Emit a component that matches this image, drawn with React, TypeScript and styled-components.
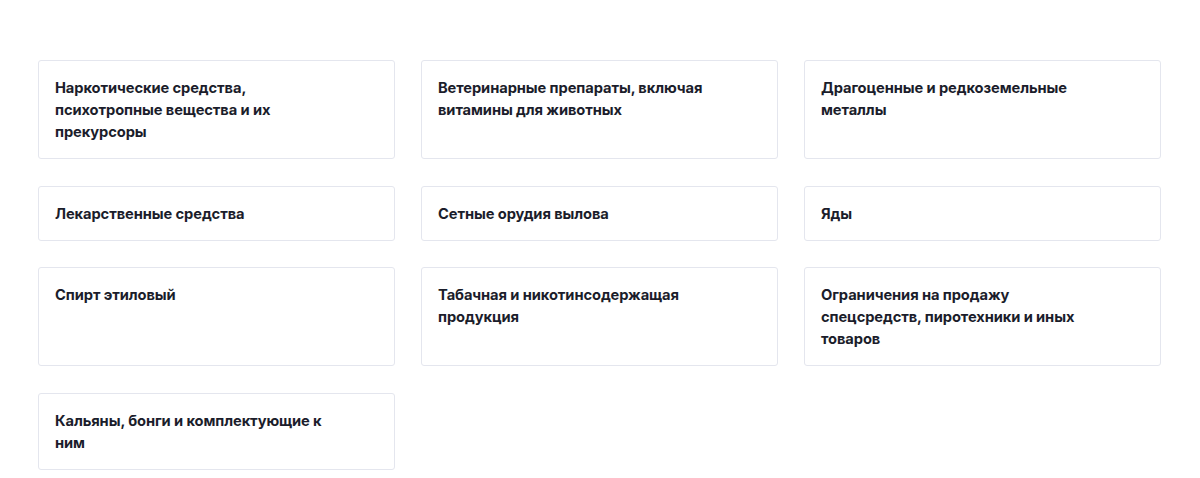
import React from 'react';
import styled, { createGlobalStyle } from 'styled-components';

const GlobalStyle = createGlobalStyle`
  html, body {
    margin: 0;
    padding: 0;
    background: #ffffff;
  }
  body {
    font-family: Inter, "Noto Sans", "Liberation Sans", sans-serif;
  }
`;

const Section = styled.section`
  padding: 60px 38px 20px 38px;
  width: 1200px;
  box-sizing: border-box;
`;

const Grid = styled.div`
  display: grid;
  grid-template-columns: repeat(3, 357px);
  column-gap: 26px;
  row-gap: 26.5px;
`;

const Card = styled.div`
  box-sizing: border-box;
  border: 1px solid #e4e6ee;
  border-radius: 3px;
  background: #fff;
  padding: 16px 16px 15px 16px;
`;

const Title = styled.div`
  font-size: 14.7px;
  font-weight: 700;
  line-height: 22px;
  color: #1b1d2b;
  max-width: 286px;
  letter-spacing: -0.1px;
`;

const items = [
  'Наркотические средства, психотропные вещества и их прекурсоры',
  'Ветеринарные препараты, включая витамины для животных',
  'Драгоценные и редкоземельные металлы',
  'Лекарственные средства',
  'Сетные орудия вылова',
  'Яды',
  'Спирт этиловый',
  'Табачная и никотинсодержащая продукция',
  'Ограничения на продажу спецсредств, пиротехники и иных товаров',
  'Кальяны, бонги и комплектующие к ним',
];

const App: React.FC = () => {
  return (
    <>
      <GlobalStyle />
      <Section>
        <Grid>
          {items.map((text) => (
            <Card key={text}>
              <Title>{text}</Title>
            </Card>
          ))}
        </Grid>
      </Section>
    </>
  );
};

export default App;
